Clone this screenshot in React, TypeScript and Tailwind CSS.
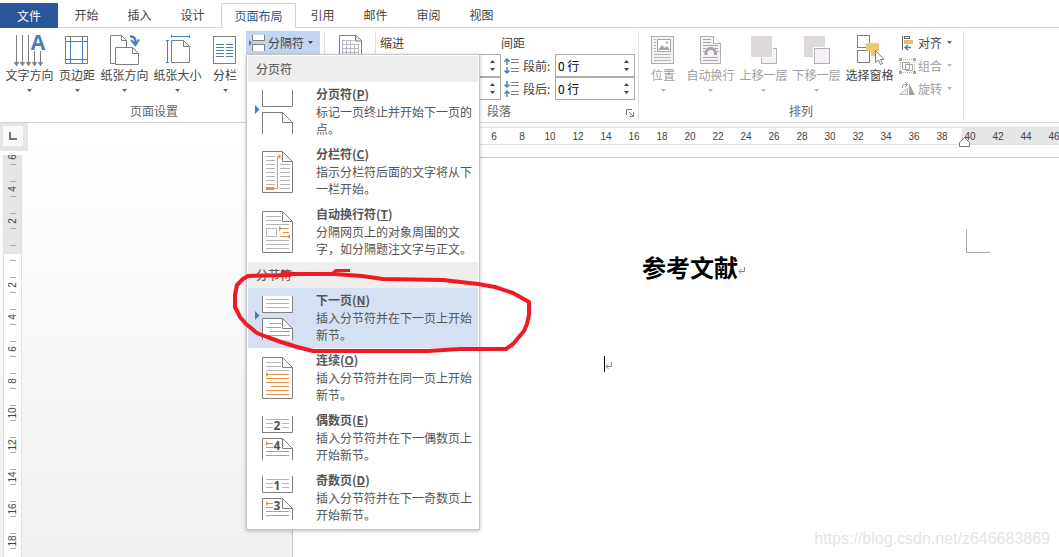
import type { ReactNode } from 'react';

const BLUE = '#4a7ebb';
const GRAY = '#7f7f7f';
const ORANGE = '#e8914a';

const Caret = ({ className = 'text-[#666]' }: { className?: string }) => (
  <svg width="5" height="3" viewBox="0 0 5 3" className={className} aria-hidden="true">
    <path d="M0 0h5L2.5 3z" fill="currentColor" />
  </svg>
);

/* ---------- ribbon icons ---------- */

const BigIcon = ({ children }: { children: ReactNode }) => (
  <svg width="32" height="32" viewBox="0 0 32 32" fill="none" stroke={GRAY} className="overflow-visible" aria-hidden="true">
    {children}
  </svg>
);

const TextDirectionIcon = () => (
  <BigIcon>
    <path d="M2.5 1v30M8.5 1v30M14.5 1v30M20.5 17v14M26.5 17v14" />
    <path d="M.5 28l2 3 2-3M6.500 28l2 3 2-3M12.500 28l2 3 2-3M18.500 28l2 3 2-3M24.500 28l2 3 2-3" strokeWidth="1.5" />
    <text x="24" y="16" textAnchor="middle" fontFamily="Open Sans" fontWeight="bold" fontSize="21" fill={BLUE} stroke="none">
      A
    </text>
  </BigIcon>
);

const MarginsIcon = () => (
  <BigIcon>
    <rect x="4.500" y="2.500" width="22" height="27" />
    <path d="M9.500 3v26M21.500 3v26M5 7.500h21M5 25.500h21" stroke={BLUE} />
  </BigIcon>
);

const OrientationIcon = () => (
  <BigIcon>
    <path d="M6 29.500H1.500V1.500h11l5 5V13M12.500 1.500v5h5" />
    <path d="M6.500 13.500h17l6 6v11h-23zM23.500 13.500v6h6" fill="#fff" />
    <path d="M21 2.500c4-.5 6 2 5.500 7" stroke={BLUE} strokeWidth="2.500" />
    <path d="M22 6l4.500 5L30 5.500" stroke={BLUE} strokeWidth="2" />
  </BigIcon>
);

const SizeIcon = () => (
  <BigIcon>
    <path d="M9.500 6.500h12l6 6v16h-18zM21.500 6.500v6h6" />
    <path d="M9 2.500h19M9.500 1v3M27.500 1v3M5.500 6v23M4 6.500h3M4 28.500h3" stroke={BLUE} />
  </BigIcon>
);

const ColumnsIcon = () => (
  <BigIcon>
    <rect x="4.500" y="2.500" width="22" height="27" />
    <path d="M7 10.500h8M17 10.500h7M7 13.500h8M17 13.500h7M7 16.500h8M17 16.500h7M7 19.500h8M17 19.500h7M7 22.500h8M17 22.500h7" stroke={BLUE} />
  </BigIcon>
);

const BreaksIcon = () => (
  <svg width="17" height="16" viewBox="0 0 17 16" fill="none" stroke={GRAY} aria-hidden="true">
    <path d="M3.500 0v5.500h12V0M3.500 16V9.500h12V16" fill="#fff" />
    <path d="M0 5l3 3-3 3z" fill={BLUE} stroke="none" />
  </svg>
);

const ManuscriptIcon = () => (
  <BigIcon>
    <path d="M5.500 31V1.500h17l5 5V31" fill="#fff" />
    <path d="M21.500 1v6h6" stroke="#5b7fa8" fill="#dfe8f5" />
    <path d="M8 6.500h12M8 10.500h17M8 14.500h17M8 18.500h17M8 22.500h17M8.500 6v18M12.500 6v18M16.500 6v18M20.500 10v14M24.500 10v14" stroke="#b9b9c6" />
  </BigIcon>
);

const PositionIcon = () => (
  <BigIcon>
    <rect x="4.500" y="2.500" width="22" height="27" fill="#f5f1f7" stroke="#b0acb0" />
    <rect x="10.500" y="5.500" width="13" height="12" fill="#fff" stroke="#a5a5a5" />
    <path d="M11 16l4-5 3 3 2-2 3 4z" fill="#a5a5a5" stroke="none" />
    <circle cx="20" cy="8.500" r="1.500" fill="#c5c5c5" stroke="none" />
    <path d="M7 5.500h2M7 8.500h2M7 11.500h2M7 14.500h2M7 17.500h2M7 20.500h17M7 23.500h17M7 26.500h17" stroke="#b5b5b5" />
  </BigIcon>
);

const WrapIcon = () => (
  <BigIcon>
    <path d="M5.500 2.500h13l7 7v20h-20z" fill="#f5f1f7" stroke="#b0acb0" />
    <path d="M18.500 2.500v7h7" fill="#fff" stroke="#b0acb0" />
    <path d="M8 5.500h8M8 8.500h8M8 11.500h15M8 14.500h3M20 14.500h3M8 17.500h2M22 17.500h2M8 23.500h15M8 26.500h15" stroke="#a5a5a5" />
    <path d="M11 21v-2c0-6 9.500-6 9.500 0v2" stroke="#a5a5a5" strokeWidth="3" />
  </BigIcon>
);

const BringForwardIcon = () => (
  <BigIcon>
    <rect x="13.500" y="14.500" width="15" height="15" fill="#f5f1f7" stroke="#b5b1b5" />
    <rect x="2" y="1" width="23" height="23" fill="#fff" stroke="none" />
    <rect x="3" y="2" width="21" height="21" fill="#dcd8dc" stroke="none" />
  </BigIcon>
);

const SendBackwardIcon = () => (
  <BigIcon>
    <rect x="3" y="2" width="21" height="21" fill="#dcd8dc" stroke="none" />
    <rect x="12" y="13" width="18" height="18" fill="#fff" stroke="none" />
    <rect x="13.500" y="14.500" width="15" height="15" fill="#f5f1f7" stroke="#b5b1b5" />
  </BigIcon>
);

const SelectionPaneIcon = () => (
  <BigIcon>
    <rect x="3.500" y="1.500" width="12" height="12" />
    <rect x="3.500" y="16.500" width="12" height="12" />
    <path d="M12 9h13v8h-4v5h-4v-5h-5z" fill="#f0c675" stroke="none" />
    <path d="M21.500 16.500v12l3-2.500 2 4.500 2-1-2-4h3.500z" fill="#fff" />
  </BigIcon>
);

const SmallIcon = ({ children }: { children: ReactNode }) => (
  <svg width="17" height="16" viewBox="0 0 17 16" fill="none" aria-hidden="true">
    {children}
  </svg>
);

const AlignIcon = () => (
  <SmallIcon>
    <path d="M3.500 1v14" stroke="#666" />
    <rect x="5.500" y="1.500" width="5" height="2" stroke="#666" />
    <rect x="5" y="5" width="9" height="4" fill="#ecb87a" />
    <path d="M12 12.500h-6M9 10L6 12.500l3 2.500" stroke={BLUE} strokeWidth="1.500" />
  </SmallIcon>
);

const GroupIcon = () => (
  <SmallIcon>
    <path d="M2 1.500h13M2 14.500h13M1.500 2v12M15.500 2v12" stroke="#b5b5b5" strokeDasharray="1 1" />
    <path d="M0 0h3v3H0zM14 0h3v3h-3zM0 13h3v3H0zM14 13h3v3h-3z" fill="#a5a5a5" />
    <path d="M3.500 4.500h7v7h-7zM6.500 6.500h7v6h-7z" stroke="#a5a5a5" />
  </SmallIcon>
);

const RotateIcon = () => (
  <SmallIcon>
    <path d="M0.500 13.500h8v-6z" stroke="#bbb" fill="#eee" />
    <path d="M10 14V2l6 12z" fill="#a5a5a5" />
    <path d="M3.500 7V5.500q0-2 2-2H8M6 1l2.500 2.500L6 6" stroke="#a5a5a5" />
  </SmallIcon>
);

const SpacingIcon = ({ after = false }: { after?: boolean }) => (
  <svg width="16" height="16" viewBox="0 0 16 16" fill="none" aria-hidden="true">
    <path
      d={after ? 'M3 0v6M.500 3.500L3 6l2.500-2.500M3 16v-6M.500 12.500L3 10l2.500 2.500' : 'M3 7V1M.500 3.500L3 1l2.500 2.500M3 9v6M.500 12.500L3 15l2.500-2.500'}
      stroke={BLUE}
      strokeWidth="1.500"
    />
    <path d="M7 1.500h8M7 4.500h8M7 10.500h8M7 13.500h8" stroke={GRAY} />
  </svg>
);

/* ---------- breaks menu icons ---------- */

const MenuIcon = ({ children }: { children: ReactNode }) => (
  <svg width="40" height="44" viewBox="0 0 40 44" fill="none" stroke={GRAY} className="ml-[6px] shrink-0" aria-hidden="true">
    {children}
  </svg>
);

const SplitPages = () => (
  <>
    <path d="M8.500 0v16.500h30V0M8.500 44V22.500h20l10 10V44" fill="#fff" />
    <path d="M28.500 22.500v10h10" />
  </>
);

const WholePage = () => (
  <>
    <path d="M8.500 1.500h20l10 10v31h-30z" fill="#fff" />
    <path d="M28.500 1.500v10h10" />
  </>
);

const Pointer = () => <path d="M1 15l4.500 4.500L1 24z" fill={BLUE} stroke="none" />;

const PageBreakIcon = () => (
  <MenuIcon>
    <SplitPages />
    <Pointer />
  </MenuIcon>
);

const ColumnBreakIcon = () => (
  <MenuIcon>
    <WholePage />
    <path d="M12 6.500h9M12 10.500h9M12 14.500h9M12 18.500h9M12 22.500h9M12 26.500h9M12 30.500h9M12 34.500h9M26 14.500h10M26 18.500h10M26 22.500h10M26 26.500h10M26 30.500h10M26 34.500h10M26 38.500h10" stroke="#b5b5b5" />
    <path d="M20 38.500h3.500v-32H26" stroke={ORANGE} />
    <path d="M12 37h8v3h-8zM24.500 4l3 2.500-3 2.500z" fill={ORANGE} stroke="none" />
  </MenuIcon>
);

const WrapBreakIcon = () => (
  <MenuIcon>
    <WholePage />
    <path d="M12 6.500h15M12 10.500h15M12 14.500h23M12 30.500h23M12 34.500h23M12 38.500h23M12.500 18.500h10v8h-10z" stroke="#b5b5b5" />
    <path d="M26 18.500h9M29 22.500h6M26 26.500h8" stroke={ORANGE} />
    <path d="M25 16l3 2.500-3 2.500zM36 24l-3 2.500 3 2.500z" fill={ORANGE} stroke="none" />
  </MenuIcon>
);

const NextPageIcon = () => (
  <MenuIcon>
    <SplitPages />
    <Pointer />
    <path d="M12 3.500h23M12 7.500h23M12 11.500h23" stroke="#b5b5b5" />
    <path d="M16 27.500h11M12 31.500h15M16 35.500h20M12 39.500h24" stroke={ORANGE} />
  </MenuIcon>
);

const ContinuousIcon = () => (
  <MenuIcon>
    <WholePage />
    <path d="M12 6.500h15M12 10.500h15M12 14.500h23" stroke="#b5b5b5" />
    <path d="M12 18.500h23M12 22.500h23M12 26.500h23M17 30.500h18M12 34.500h23M12 38.500h23" stroke={ORANGE} />
    <path d="M12 16l3 2.500-3 2.500z" fill={ORANGE} stroke="none" />
  </MenuIcon>
);

const NumberedIcon = ({ first, second }: { first: string; second: string }) => (
  <MenuIcon>
    <SplitPages />
    <path d="M12 3.500h23M12 7.500h7M28 7.500h7M12 11.500h7M28 11.500h7" stroke="#b5b5b5" />
    <path d="M12 27.500h7M12 31.500h7M12 35.500h23M12 39.500h23" stroke={ORANGE} />
    <path d="M12 25l3 2.500-3 2.500z" fill={ORANGE} stroke="none" />
    <g fontFamily="Open Sans" fontWeight="bold" fontSize="12" fill="#505050" stroke="none" textAnchor="middle">
      <text x="23" y="14">{first}</text>
      <text x="23" y="34">{second}</text>
    </g>
  </MenuIcon>
);

/* ---------- ribbon parts ---------- */

type BigButtonProps = { icon: ReactNode; label: string; narrow?: boolean; disabled?: boolean; menu?: boolean };

const BigButton = ({ icon, label, narrow, disabled, menu = true }: BigButtonProps) => (
  <button
    type="button"
    disabled={disabled}
    className={`flex shrink-0 flex-col items-center pt-[3px] disabled:text-[#a0a0a0] ${narrow ? 'w-[42px]' : 'w-[53px]'}`}
  >
    {icon}
    <span className="mt-px leading-4 whitespace-nowrap">{label}</span>
    {menu && <Caret className={disabled ? 'mt-[6px] text-[#b8b8b8]' : 'mt-[6px] text-[#666]'} />}
  </button>
);

const SmallButton = ({ icon, label, disabled }: { icon: ReactNode; label: string; disabled?: boolean }) => (
  <button type="button" disabled={disabled} className="flex h-[23px] items-center gap-[2px] disabled:text-[#a0a0a0]">
    {icon}
    <span>{label}</span>
    <Caret className={disabled ? 'ml-[3px] text-[#b8b8b8]' : 'ml-[3px] text-[#666]'} />
  </button>
);

const RibbonGroup = ({ title, launcher, children }: { title?: string; launcher?: boolean; children: ReactNode }) => (
  <section className="flex flex-col justify-between border-r border-[#e1e1e1]">
    <div className="flex">{children}</div>
    <div className="flex h-4 items-center text-[#666]">
      <span className="flex-1 text-center">{title}</span>
      {launcher && (
        <button type="button" aria-label={`${title}对话框`} className="flex w-4 justify-center pt-1">
          <svg width="8" height="8" viewBox="0 0 8 8" fill="none" stroke="#777" aria-hidden="true">
            <path d="M.500 6V.500H6M3 3l4 4M7.500 3.500v4h-4" />
          </svg>
        </button>
      )}
    </div>
  </section>
);

const Spinner = ({ id, value, label }: { id: string; value: string; label?: string }) => (
  <div className="flex h-[23px] w-20 border border-[#ababab] bg-white">
    <input id={id} aria-label={label} defaultValue={value} className="w-full min-w-0 flex-1 px-[2px] text-black outline-none" />
    <div className="flex w-4 flex-col items-center justify-evenly">
      <button type="button" aria-label="增加" className="rotate-180">
        <Caret className="block" />
      </button>
      <button type="button" aria-label="减少">
        <Caret className="block" />
      </button>
    </div>
  </div>
);

/* ---------- breaks menu ---------- */

type BreakItem = { title: string; hotkey: string; text: string; icon: ReactNode; active?: boolean };

const pageBreaks: BreakItem[] = [
  { title: '分页符', hotkey: 'P', text: '标记一页终止并开始下一页的点。', icon: <PageBreakIcon /> },
  { title: '分栏符', hotkey: 'C', text: '指示分栏符后面的文字将从下一栏开始。', icon: <ColumnBreakIcon /> },
  { title: '自动换行符', hotkey: 'T', text: '分隔网页上的对象周围的文字，如分隔题注文字与正文。', icon: <WrapBreakIcon /> },
];

const sectionBreaks: BreakItem[] = [
  { title: '下一页', hotkey: 'N', text: '插入分节符并在下一页上开始新节。', icon: <NextPageIcon />, active: true },
  { title: '连续', hotkey: 'O', text: '插入分节符并在同一页上开始新节。', icon: <ContinuousIcon /> },
  { title: '偶数页', hotkey: 'E', text: '插入分节符并在下一偶数页上开始新节。', icon: <NumberedIcon first="2" second="4" /> },
  { title: '奇数页', hotkey: 'D', text: '插入分节符并在下一奇数页上开始新节。', icon: <NumberedIcon first="1" second="3" /> },
];

const MenuSection = ({ title, items }: { title: string; items: BreakItem[] }) => (
  <>
    <h3 className="h-[26px] bg-[#eee] pl-2 leading-[26px] font-medium text-[#666]">{title}</h3>
    {items.map((item) => (
      <button
        key={item.hotkey}
        type="button"
        role="menuitem"
        className={`flex h-[60px] w-full items-center text-left text-[#555] ${item.active ? 'bg-[#d5e1f2]' : ''}`}
      >
        {item.icon}
        <span className="ml-[22px] flex w-[158px] flex-col gap-px pb-[2px] leading-[17px]">
          <strong>
            {item.title}(<u>{item.hotkey}</u>)
          </strong>
          <span>{item.text}</span>
        </span>
      </button>
    ))}
  </>
);

const BreaksMenu = () => (
  <div role="menu" className="absolute top-full left-0 z-20 w-[234px] border border-[#c6c6c6] bg-white p-px shadow-[0_1px_4px_rgba(0,0,0,0.25)]">
    <MenuSection title="分页符" items={pageBreaks} />
    <MenuSection title="分节符" items={sectionBreaks} />
  </div>
);

/* ---------- rulers and page ---------- */

const verticalMarks = ['6', '4', '2', '', '2', '4', '6', '8', '10', '12', '14', '16', '18'];
const horizontalMarks = [
  '6', '8', '10', '12', '14', '16', '18', '20', '22', '24', '26',
  '28', '30', '32', '34', '36', '38', '40', '42', '44', '46',
];

const VerticalRuler = () => (
  <div className="ml-[3px] w-[19px] flex-1 overflow-hidden border-x border-[#e1e1e1] bg-[linear-gradient(to_bottom,#e6e6e6_99px,#fff_99px)] font-['Liberation_Sans',sans-serif] text-[10px] text-[#444]">
    {verticalMarks.map((mark, i) => (
      <div key={i} className={`flex flex-col justify-end overflow-hidden ${i === 0 ? 'h-[18px]' : 'h-8'}`}>
        <div className="flex h-8 shrink-0 flex-col items-center justify-between py-2 pl-px">
          <i className="h-px w-[6px] bg-[#aaa]" />
          <span className="flex h-3 -rotate-90 items-center leading-none">{mark}</span>
          <i className="h-px w-[6px] bg-[#aaa]" />
        </div>
      </div>
    ))}
  </div>
);

const HorizontalRuler = () => (
  <div className="relative mt-1 h-[18px] border-y border-[#e1e1e1] bg-[linear-gradient(to_right,#fff_669px,#e6e6e6_669px)]">
    <div className="flex overflow-hidden pl-[187px] font-['Liberation_Sans',sans-serif] text-[10px] leading-[18px] text-[#444]">
      {horizontalMarks.map((mark) => (
        <span key={mark} className="w-7 shrink-0 text-center">{mark}</span>
      ))}
    </div>
    <svg width="11" height="10" viewBox="0 0 11 10" className="absolute top-[9px] left-[666px]" aria-hidden="true">
      <path d="M.500 9.500v-4l5-5 5 5v4z" fill="#fff" stroke="#777" />
    </svg>
  </div>
);

const ReturnMark = () => (
  <svg width="8" height="8" viewBox="0 0 8 8" fill="none" stroke="#888" aria-hidden="true">
    <path d="M6.500 0v4.500H1M3.500 2L1 4.500 3.500 7" />
  </svg>
);

const tabsBefore = ['开始', '插入', '设计'];
const tabsAfter = ['引用', '邮件', '审阅', '视图'];

const Tab = ({ label }: { label: string }) => (
  <button type="button" role="tab" className="w-[53px] border-b border-[#d4d4d4]">
    {label}
  </button>
);

const App = () => {
  return (
    <div className="relative flex min-h-screen flex-col overflow-hidden bg-white font-['Noto_Sans_CJK_SC',sans-serif] text-[12px] text-[#444]">
      <div role="tablist" className="flex h-7 pt-[3px]">
        <button type="button" role="tab" className="w-[58px] bg-[#2b579a] text-white">
          文件
        </button>
        <div className="w-[2px] border-b border-[#d4d4d4]" />
        {tabsBefore.map((label) => (
          <Tab key={label} label={label} />
        ))}
        <div className="w-[2px] border-b border-[#d4d4d4]" />
        <button type="button" role="tab" aria-selected="true" className="w-[75px] border border-b-0 border-[#d4d4d4] text-[#2b579a]">
          页面布局
        </button>
        {tabsAfter.map((label) => (
          <Tab key={label} label={label} />
        ))}
        <div className="flex-1 border-b border-[#d4d4d4]" />
      </div>

      <div className="flex h-[95px] border-b border-[#d4d4d4] pt-[3px] pb-[3px]">
        <RibbonGroup title="页面设置" launcher>
          <div className="flex pl-[3px]">
            <BigButton icon={<TextDirectionIcon />} label="文字方向" />
            <BigButton icon={<MarginsIcon />} label="页边距" narrow />
            <BigButton icon={<OrientationIcon />} label="纸张方向" />
            <BigButton icon={<SizeIcon />} label="纸张大小" />
            <BigButton icon={<ColumnsIcon />} label="分栏" narrow />
          </div>
          <div className="relative mr-1 h-[23px]">
            <button type="button" aria-haspopup="menu" aria-expanded="true" className="flex h-full w-[74px] items-center gap-[2px] bg-[#c2d5f2] pl-[3px]">
              <BreaksIcon />
              <span className="whitespace-nowrap">分隔符</span>
              <Caret className="ml-[2px] text-[#444]" />
            </button>
            <BreaksMenu />
          </div>
        </RibbonGroup>

        <RibbonGroup>
          <button type="button" aria-label="稿纸设置" className="w-[50px] pt-[3px] pl-[9px]">
            <ManuscriptIcon />
          </button>
        </RibbonGroup>

        <RibbonGroup title="段落" launcher>
          <div className="w-[125px] pl-1">
            <div className="h-[23px] leading-[23px]">缩进</div>
            <div className="flex flex-col items-end">
              <Spinner id="indent-left" label="左缩进" value="0 字符" />
              <Spinner id="indent-right" label="右缩进" value="0 字符" />
            </div>
          </div>
          <div className="pr-[3px]">
            <div className="h-[23px] leading-[23px]">间距</div>
            <div className="flex items-center pl-[3px]">
              <SpacingIcon />
              <label htmlFor="space-before" className="w-[35px] pl-[3px] whitespace-nowrap">段前:</label>
              <Spinner id="space-before" value="0 行" />
            </div>
            <div className="flex items-center pl-[3px]">
              <SpacingIcon after />
              <label htmlFor="space-after" className="w-[35px] pl-[3px] whitespace-nowrap">段后:</label>
              <Spinner id="space-after" value="0 行" />
            </div>
          </div>
        </RibbonGroup>

        <RibbonGroup title="排列">
          <div className="flex pl-[3px]">
            <BigButton icon={<PositionIcon />} label="位置" narrow disabled />
            <BigButton icon={<WrapIcon />} label="自动换行" disabled />
            <BigButton icon={<BringForwardIcon />} label="上移一层" disabled />
            <BigButton icon={<SendBackwardIcon />} label="下移一层" disabled />
            <BigButton icon={<SelectionPaneIcon />} label="选择窗格" menu={false} />
          </div>
          <div className="pr-[11px] pl-[3px]">
            <SmallButton icon={<AlignIcon />} label="对齐" />
            <SmallButton icon={<GroupIcon />} label="组合" disabled />
            <SmallButton icon={<RotateIcon />} label="旋转" disabled />
          </div>
        </RibbonGroup>
      </div>

      <div className="flex flex-1 bg-linear-to-b from-white to-[#f1f1f1]">
        <div className="flex w-7 shrink-0 flex-col gap-1">
          <div className="h-7 bg-[#e6e6e6] p-[3px]">
            <button type="button" aria-label="制表符" className="flex size-5 items-center justify-center bg-[#fafafa]">
              <svg width="8" height="8" viewBox="0 0 8 8" aria-hidden="true">
                <path d="M1 0v7h7" fill="none" stroke="#777" strokeWidth="2" />
              </svg>
            </button>
          </div>
          <VerticalRuler />
        </div>

        <main className="ml-[264px] flex min-w-0 flex-1 flex-col gap-3 bg-white">
          <div className="pl-px">
            <HorizontalRuler />
          </div>
          <article className="flex flex-1 flex-col border-t border-l border-[#c6c6c6] pt-[71px] pr-[69px] pl-[127px] text-black">
            <div className="size-6 self-end border-b border-l border-[#aaa]" />
            <h1 className="mr-[22px] flex h-7 items-center justify-center text-[24px] font-bold">
              参考文献
              <span className="pt-2">
                <ReturnMark />
              </span>
            </h1>
            <p className="mt-[75px] ml-[184px] flex h-4 items-center border-l border-black pt-1">
              <ReturnMark />
            </p>
          </article>
        </main>
      </div>

      {/* hand-drawn ring round the "next page" entry */}
      <svg
        width="310"
        height="100"
        viewBox="230 260 310 100"
        className="pointer-events-none absolute top-[260px] left-[230px] z-30"
        fill="none"
        stroke="#ed1c24"
        strokeWidth="4"
        strokeLinejoin="round"
        aria-hidden="true"
      >
        <path d="M350 270.500H336L333 273" strokeWidth="3" />
        <path d="M281 272.500L295 274L334 274L362 276L383 279L443 280L478 284L495 287L513 293L529 302V315L527 324L524 331L513 344L506 349L460 349L428 351H313L297 347L281 342L267 337L257 333L246 324L240 317L235 307L235 295L237 285L243 279L248 276L291 275" />
      </svg>

      <div className="absolute right-[9px] bottom-2 font-['Liberation_Sans',sans-serif] text-[16px] leading-5 text-[#e4e4e4]">
        https://blog.csdn.net/z646683869
      </div>
    </div>
  );
};

export default App;
